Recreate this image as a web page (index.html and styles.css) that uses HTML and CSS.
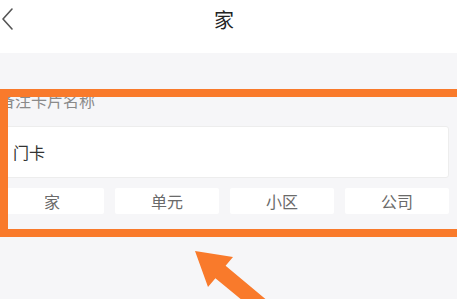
FILE: index.html
```html
<!DOCTYPE html>
<html lang="zh">
<head>
<meta charset="utf-8">
<link rel="stylesheet" href="styles.css">
</head>
<body>
<div class="page">
  <header class="topbar">
    <svg class="back" width="14" height="24" viewBox="0 0 14 24"><path d="M11 2 L2 12 L11 22" fill="none" stroke="#555" stroke-width="1.6" stroke-linecap="round" stroke-linejoin="round"/></svg>
    <div class="title">家</div>
  </header>
  <main class="content">
    <div class="label">备注卡片名称</div>
    <div class="input">门卡</div>
    <div class="chips">
      <div class="chip">家</div>
      <div class="chip">单元</div>
      <div class="chip">小区</div>
      <div class="chip">公司</div>
    </div>
  </main>
  <div class="highlight"></div>
  <svg class="arrow" width="457" height="299" viewBox="0 0 457 299"><polygon points="195,251 233,257 225.6,265.8 287,317 277,329 215.4,278.2 208,287" fill="#f97a2b"/></svg>
</div>
</body>
</html>
```

FILE: styles.css
```css
html, body {
  margin: 0;
  padding: 0;
}
body {
  width: 457px;
  height: 299px;
  overflow: hidden;
  background: #f6f6f8;
  font-family: "Noto Sans CJK SC", "Noto Sans", sans-serif;
}
.page {
  position: relative;
  width: 457px;
  height: 299px;
  overflow: hidden;
}
.topbar {
  height: 53px;
  background: #ffffff;
  display: flex;
  align-items: center;
  padding-left: 1px;
}
.back {
  flex: none;
  margin-top: -16px;
}
.title {
  flex: 1;
  text-align: center;
  font-size: 20px;
  color: #222;
  padding-right: 24px;
  margin-top: -14px;
}
.content {
  padding: 0 8px 0 0;
}
.label {
  margin-top: 37px;
  font-size: 16px;
  line-height: 20px;
  color: #8a8a8a;
  margin-left: -1px;
}
.input {
  margin-top: 16px;
  height: 52px;
  box-sizing: border-box;
  background: #fff;
  border: 1px solid #ededed;
  border-radius: 3px;
  display: flex;
  align-items: center;
  padding-left: 12px;
  font-size: 16px;
  color: #333;
}
.chips {
  margin-top: 10px;
  display: grid;
  grid-template-columns: repeat(4, 1fr);
  gap: 11px;
}
.chip {
  height: 26px;
  background: #fff;
  border-radius: 2px;
  display: flex;
  align-items: center;
  justify-content: center;
  font-size: 16px;
  color: #6a6a6a;
}
.highlight {
  position: absolute;
  left: 0;
  top: 89px;
  width: 470px;
  height: 148px;
  box-sizing: border-box;
  border: 8px solid #f97a2b;
}
.arrow {
  position: absolute;
  left: 0;
  top: 0;
}
```
